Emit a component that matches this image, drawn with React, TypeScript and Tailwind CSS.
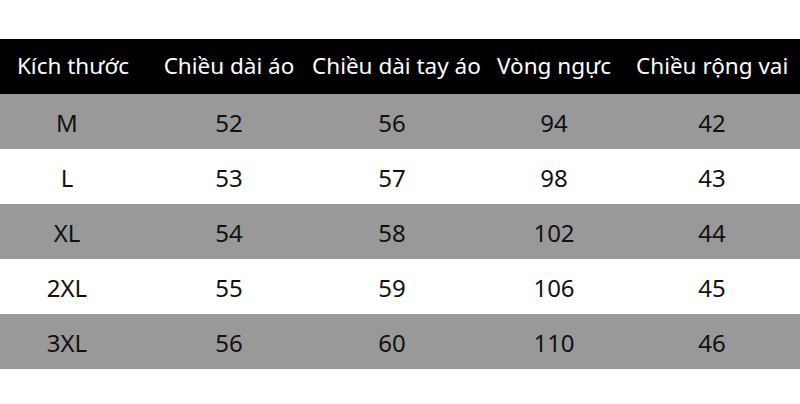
const headers = ['Kích thước', 'Chiều dài áo', 'Chiều dài tay áo', 'Vòng ngực', 'Chiều rộng vai'];

const rows = [
  ['M', '52', '56', '94', '42'],
  ['L', '53', '57', '98', '43'],
  ['XL', '54', '58', '102', '44'],
  ['2XL', '55', '59', '106', '45'],
  ['3XL', '56', '60', '110', '46'],
];

const cols = 'grid grid-cols-[146px_166px_160px_164px_152px_12px]';

export default function App() {
  return (
    <div
      className="w-[800px] h-[404px] bg-white pt-[39px] overflow-hidden"
      style={{ fontFamily: '"Noto Sans", "Open Sans", sans-serif' }}
    >
      <div className={`${cols} h-[55px] bg-black text-white text-[22.5px] items-center`}>
        {headers.map((h) => (
          <div key={h} className="text-center whitespace-nowrap pb-[2px]">
            {h}
          </div>
        ))}
      </div>
      {rows.map((r, i) => (
        <div
          key={r[0]}
          className={`${cols} h-[55px] items-center text-[24px] text-[#111] ${
            i % 2 === 0 ? 'bg-[#999999]' : 'bg-white'
          }`}
        >
          {r.map((c, j) => (
            <div key={j} className={`text-center pt-[3px] ${j === 0 ? 'pr-[12px]' : ''}`}>
              {c}
            </div>
          ))}
        </div>
      ))}
    </div>
  );
}
